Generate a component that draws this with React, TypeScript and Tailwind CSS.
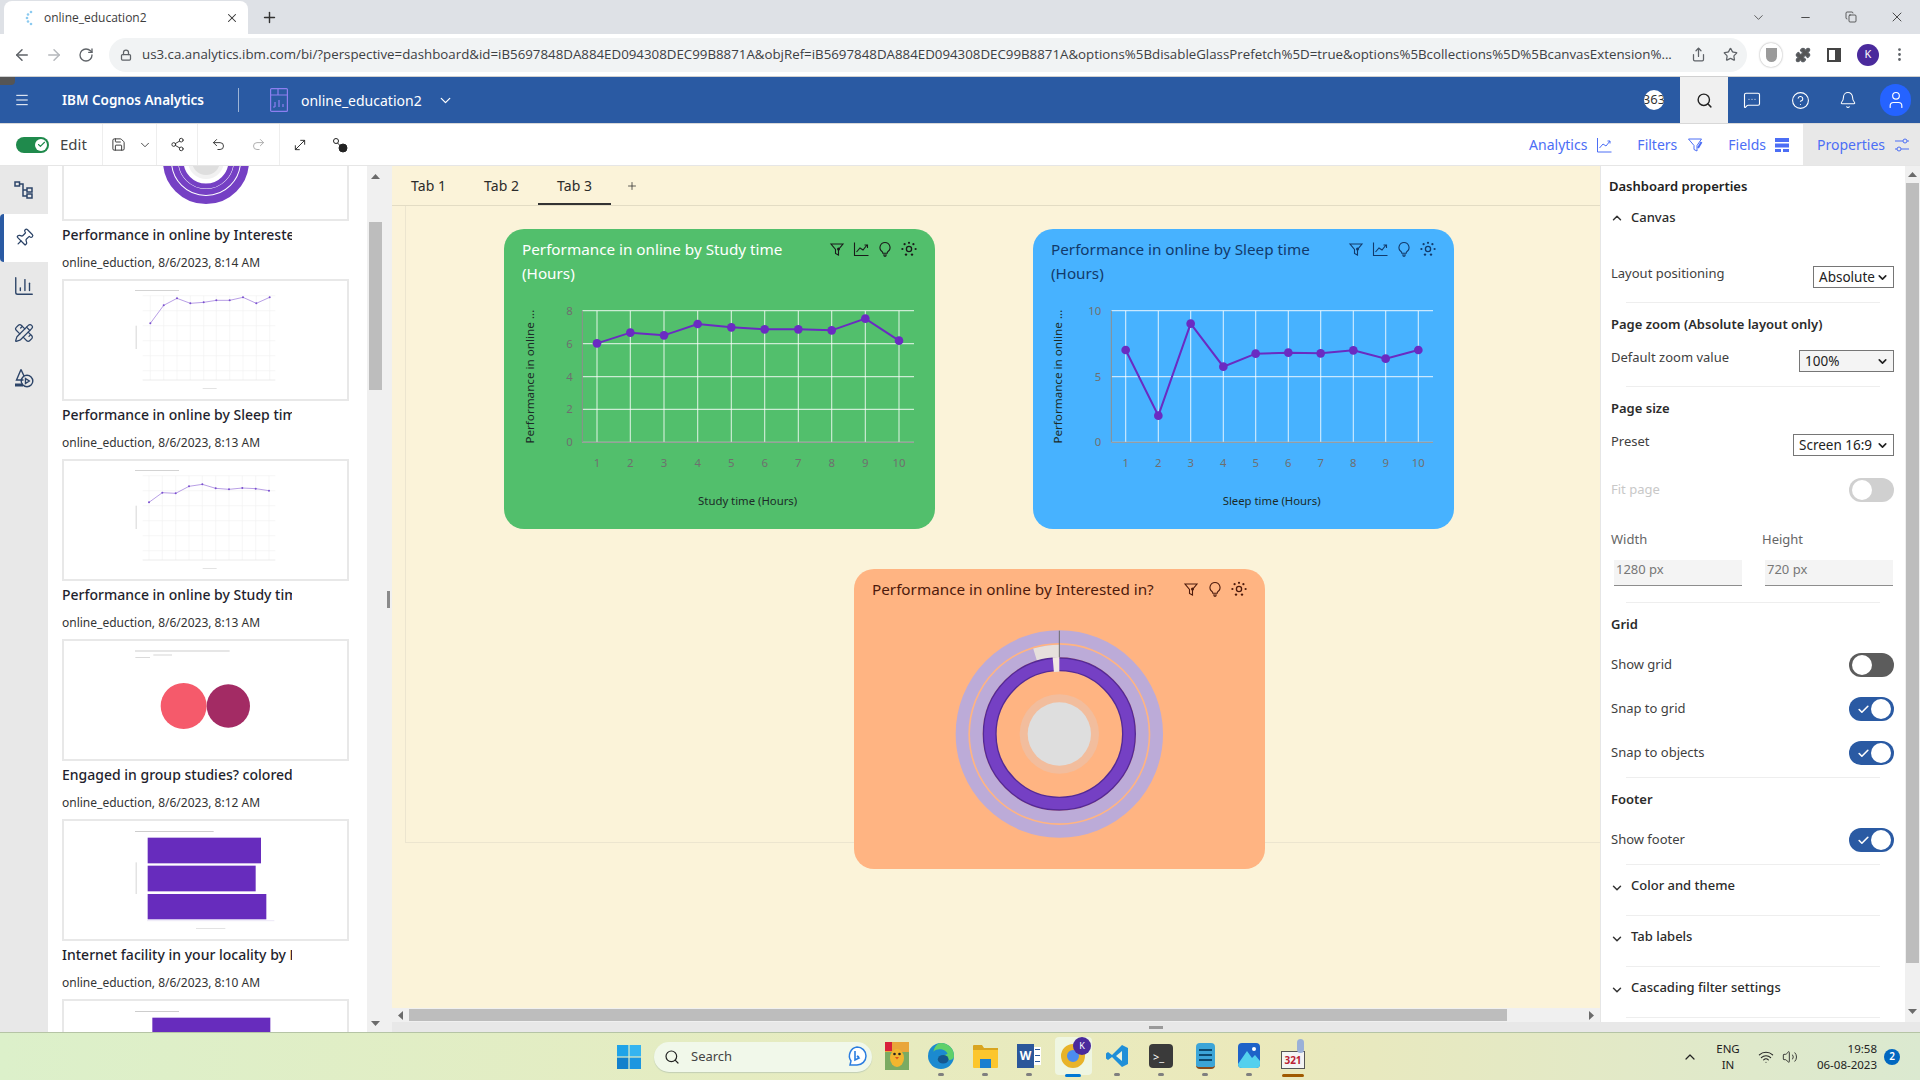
import {
  ArrowLeft, ArrowRight, RotateCw, Lock, Star, Puzzle, EllipsisVertical, ChevronDown, ChevronUp, X, Plus, Minus,
  Menu, Search, Bell, CircleHelp, User, Share2, Undo2, Redo2, Save, MoveDiagonal, Pin, ChartColumn, PencilRuler,
  Copy, Share, MessageSquareMore, Check, Wifi, Volume2,
} from 'lucide-react';
import type { ReactNode } from 'react';

const listItems = [
  { title: 'Performance in online by Interested in?', meta: 'online_eduction, 8/6/2023, 8:14 AM', kind: 'line1' },
  { title: 'Performance in online by Sleep time (Hours)', meta: 'online_eduction, 8/6/2023, 8:13 AM', kind: 'line2' },
  { title: 'Performance in online by Study time (Hours)', meta: 'online_eduction, 8/6/2023, 8:13 AM', kind: 'circles' },
  { title: 'Engaged in group studies? colored', meta: 'online_eduction, 8/6/2023, 8:12 AM', kind: 'bars' },
  { title: 'Internet facility in your locality by Performance', meta: 'online_eduction, 8/6/2023, 8:10 AM', kind: 'bar2' },
];

const gridX = [0, 1, 2, 3, 4, 5, 6, 7, 8, 9];

function MiniLine({ xs, ys }: { xs: number[]; ys: number[] }) {
  return (
    <>
      <rect x="405" y="34" width="132" height="2" fill="#bdbdbd" />
      {gridX.map((i) => (
        <line key={i} x1={xs[i]} x2={xs[i]} y1="50" y2="303" stroke="#f3f3f3" strokeWidth="2" />
      ))}
      {[50, 95, 140, 185, 230, 275].map((y) => (
        <line key={y} x1="428" x2="826" y1={y} y2={y} stroke="#f3f3f3" strokeWidth="2" />
      ))}
      <line x1="428" x2="826" y1="303" y2="303" stroke="#e2e2e2" strokeWidth="2" />
      <polyline points={xs.map((x, i) => `${x},${ys[i]}`).join(' ')} fill="none" stroke="#a98be0" strokeWidth="2.5" />
      {xs.map((x, i) => <circle key={x} cx={x} cy={ys[i]} r="3" fill="#7a4fd0" />)}
      <rect x="407" y="140" width="3" height="70" fill="#d6d6d6" />
      <rect x="608" y="327" width="42" height="2" fill="#d6d6d6" />
    </>
  );
}

function Thumb({ kind }: { kind: string }) {
  return (
    <div className="h-[122px] w-[287px] border-2 border-[#e8e8e8] bg-white">
      <svg className="block h-[118px] w-[283px]" viewBox="192 6 849 354">
        {kind === 'line1' && (
          <MiniLine xs={[451, 491, 531, 571, 611, 649, 689, 729, 769, 809]} ys={[133, 79, 58, 73, 70, 64, 64, 55, 73, 55]} />
        )}
        {kind === 'line2' && (
          <MiniLine xs={[447, 487, 527, 567, 607, 647, 687, 727, 767, 807]} ys={[130, 101, 103, 82, 76, 88, 91, 87, 89, 95]} />
        )}
        {kind === 'circles' && (
          <>
            <rect x="405" y="35" width="284" height="2" fill="#b4b4b4" />
            <rect x="460" y="47" width="56" height="2" fill="#c0c0c0" />
            <rect x="406" y="54" width="44" height="2" fill="#c8c8c8" />
            <circle cx="551" cy="201" r="69" fill="#f55a6b" />
            <circle cx="685" cy="201" r="65" fill="#a32b64" />
          </>
        )}
        {kind === 'bars' && (
          <>
            <rect x="405" y="36" width="236" height="2" fill="#b4b4b4" />
            <rect x="443" y="56" width="340" height="77" fill="#672cbd" />
            <rect x="443" y="140" width="324" height="77" fill="#672cbd" />
            <rect x="443" y="225" width="356" height="76" fill="#672cbd" />
            <line x1="441" x2="823" y1="305" y2="305" stroke="#e2dcf2" strokeWidth="2" />
            <rect x="407" y="130" width="3" height="95" fill="#d6d6d6" />
            <rect x="588" y="327" width="88" height="2" fill="#d6d6d6" />
          </>
        )}
        {kind === 'bar2' && (
          <>
            <rect x="405" y="36" width="132" height="2" fill="#b4b4b4" />
            <rect x="457" y="56" width="354" height="90" fill="#672cbd" />
          </>
        )}
      </svg>
    </div>
  );
}

function TriUp({ dir = 'up' }: { dir?: 'up' | 'down' | 'left' | 'right' }) {
  const turn = { up: '', down: 'rotate-180', left: '-rotate-90', right: 'rotate-90' }[dir];
  return (
    <svg width="9" height="5" viewBox="0 0 9 5" className={turn}>
      <path d="M4.5 0 9 5H0z" fill="#6b6b6b" />
    </svg>
  );
}

function FunnelIco() {
  return (
    <svg width="16" height="16" viewBox="0 0 16 16" fill="none" stroke="currentColor" strokeWidth="1.1">
      <path d="M2 3h12l-4.500 5.500V14l-3-1.500v-4z" />
      <circle cx="9.500" cy="8" r="1.500" fill="currentColor" stroke="none" />
    </svg>
  );
}

function TrendIco() {
  return (
    <svg width="16" height="16" viewBox="0 0 16 16" fill="none" stroke="currentColor" strokeWidth="1.1">
      <path d="M1.500 1.500v13h14" />
      <path d="M3.500 11l3.500-4 3 2 4-5M11.500 4h3v3" />
    </svg>
  );
}

function BulbIco() {
  return (
    <svg width="16" height="16" viewBox="0 0 16 16" fill="none" stroke="currentColor" strokeWidth="1.1">
      <path d="M8 1.500a5 5 0 0 0-3 9c.6.5.8 1 .8 1.700h4.400c0-.7.2-1.200.8-1.700a5 5 0 0 0-3-9z" />
      <path d="M6 14h4M6.800 15.300h2.400" />
    </svg>
  );
}

function SparkIco() {
  return (
    <svg width="16" height="16" viewBox="0 0 16 16" fill="currentColor">
      <circle cx="8" cy="8" r="2.600" fill="none" stroke="currentColor" strokeWidth="1.300" />
      <circle cx="8" cy="1.800" r="1.100" /><circle cx="3.600" cy="3.200" r="1.100" /><circle cx="12.400" cy="3.200" r="1.100" />
      <circle cx="1.400" cy="8" r="1.100" /><circle cx="14.600" cy="8" r="1.100" /><circle cx="5" cy="13.600" r="1.200" /><circle cx="11" cy="13.600" r="1.200" />
    </svg>
  );
}

function CardHead({ title, color, icons, trend, w }: { title: string; color: string; icons: string; trend?: boolean; w: string }) {
  return (
    <div className="flex items-start justify-between pl-[18px] pr-[18px] pt-2">
      <div className={`text-[15.25px] leading-6 ${w} ${color}`}>{title}</div>
      <div className={`flex h-6 items-center gap-2 ${icons}`}>
        <FunnelIco />
        {trend && <TrendIco />}
        <BulbIco />
        <SparkIco />
      </div>
    </div>
  );
}

function LineChart(props: {
  vx: number; w: number; left: number; right: number; xs: number[]; ys: number[];
  yTicks: { y: number; label: string }[]; xTitle: string; xTitleAt: number; yTitleX: number; labelX: number;
}) {
  const { vx, w, left, right, xs, ys, yTicks, xTitle, xTitleAt, yTitleX, labelX } = props;
  return (
    <svg className="block" width={w} height="244" viewBox={`${vx} 195 ${w * 3} 732`} fontFamily="Noto Sans, sans-serif">
      {xs.map((x) => <line key={x} x1={x} x2={x} y1="272" y2="667" stroke="#fff" strokeOpacity=".72" strokeWidth="3.5" />)}
      {yTicks.map((t) => (
        <g key={t.y}>
          <line x1={left} x2={right} y1={t.y} y2={t.y} stroke="#fff" strokeOpacity=".7" strokeWidth="3.5" />
          <text x={labelX} y={t.y - 2} fontSize="34" fill="#6f6f6f" textAnchor="end" dominantBaseline="central">{t.label}</text>
        </g>
      ))}
      <line x1={left} x2={left} y1="272" y2="667" stroke="#8f8f8f" strokeWidth="3" />
      <line x1={left} x2={right} y1="667" y2="667" stroke="#8f8f8f" strokeWidth="3" />
      {xs.map((x, i) => (
        <text key={x} x={x} y="726" fontSize="34" fill="#6f6f6f" textAnchor="middle" dominantBaseline="central">{i + 1}</text>
      ))}
      <polyline points={xs.map((x, i) => `${x},${ys[i]}`).join(' ')} fill="none" stroke="#6a2bc2" strokeWidth="6" />
      {xs.map((x, i) => <circle key={x} cx={x} cy={ys[i]} r="13" fill="#6a2bc2" />)}
      <text x={xTitleAt} y="840" fontSize="34" fill="#1c2b28" textAnchor="middle" dominantBaseline="central">{xTitle}</text>
      <text
        x={yTitleX} y="470" fontSize="35" fill="#1c2b28" textAnchor="middle" dominantBaseline="central"
        transform={`rotate(-90 ${yTitleX} 470)`}
      >
        Performance in online ...
      </text>
    </svg>
  );
}

const polar = (r: number, deg: number) => {
  const a = ((deg - 90) * Math.PI) / 180;
  return `${628 + r * Math.cos(a)} ${522 + r * Math.sin(a)}`;
};
const arc = (r: number, from: number, to: number) =>
  `M${polar(r, from)} A${r} ${r} 0 ${to - from > 180 ? 1 : 0} 1 ${polar(r, to)}`;

function Donut() {
  return (
    <svg className="block" width="411" height="268" viewBox="12 123 1233 804">
      <circle cx="628" cy="522" r="292" fill="none" stroke="#bcabd8" strokeWidth="38" />
      <circle cx="628" cy="522" r="249" fill="none" stroke="#bcabd8" strokeWidth="38" />
      <path d={arc(249, -17, 0)} fill="none" stroke="#e6e0dc" strokeWidth="38" />
      <circle cx="628" cy="522" r="209" fill="none" stroke="#542a96" strokeWidth="42" />
      <circle cx="628" cy="522" r="209" fill="none" stroke="#7540c4" strokeWidth="34" />
      <path d={arc(209, -5, 0)} fill="none" stroke="#f1e8e2" strokeWidth="44" />
      <circle cx="628" cy="522" r="119" fill="#f2bd9d" />
      <circle cx="628" cy="522" r="95" fill="#dedede" />
      <line x1="628" x2="628" y1="212" y2="292" stroke="#6b6b6b" strokeWidth="3" />
    </svg>
  );
}

function Toggle({ state }: { state: 'on' | 'off' | 'disabled' }) {
  if (state === 'on') {
    return (
      <div className="flex h-6 w-[45px] items-center justify-between rounded-full bg-[#2a5aa3] pl-2 pr-[3px]">
        <Check size={13} strokeWidth={3} className="text-white" />
        <div className="h-[20px] w-[20px] rounded-full bg-white" />
      </div>
    );
  }
  return (
    <div className={`flex h-6 w-[45px] items-center rounded-full pl-[3px] ${state === 'off' ? 'bg-[#5c5c5c]' : 'bg-[#d0d0d0]'}`}>
      <div className="h-[20px] w-[20px] rounded-full bg-white" />
    </div>
  );
}

function Sel({ w, label, grey }: { w: string; label: string; grey?: boolean }) {
  return (
    <div className={`flex h-[22px] items-center justify-between border border-[#767676] pl-[5px] pr-1 text-[13.5px] text-[#222] ${w} ${grey ? 'bg-[#f4f4f4]' : 'bg-white'}`}>
      <span>{label}</span>
      <ChevronDown size={13} strokeWidth={3} />
    </div>
  );
}

function Divider({ mt }: { mt: string }) {
  return <div className={`ml-[25px] h-px w-[254px] bg-[#eeeeee] ${mt}`} />;
}

function ToggleRow({ label, state, mt }: { label: string; state: 'on' | 'off'; mt: string }) {
  return (
    <div className={`flex h-6 items-center justify-between pl-[10px] pr-[11px] ${mt}`}>
      <span className="text-[13px] text-[#3f3f3f]">{label}</span>
      <Toggle state={state} />
    </div>
  );
}

function Heading({ label, mt }: { label: string; mt: string }) {
  return <div className={`h-5 pl-[10px] text-[13px] font-semibold leading-5 text-[#2b2b2b] ${mt}`}>{label}</div>;
}

function Collapsed({ label, open, mt }: { label: string; open?: boolean; mt: string }) {
  return (
    <div className={`flex h-5 items-center pl-[9px] ${mt}`}>
      {open ? <ChevronUp size={14} strokeWidth={2.5} className="text-[#333]" /> : <ChevronDown size={14} strokeWidth={2.5} className="mt-1 text-[#333]" />}
      <span className="ml-[7px] text-[13px] font-medium text-[#2b2b2b]">{label}</span>
    </div>
  );
}

function ChromeBar() {
  return (
    <>
      <div className="flex h-[34px] items-end bg-[#dee1e6] text-[#333]">
        <div className="ml-1 flex h-[33px] w-[244px] items-center rounded-t-lg bg-white pl-[20px] pr-[9px]">
          <svg width="10" height="16" viewBox="0 0 10 16" fill="#8ccaf0">
            <circle cx="7" cy="2" r="1.300" /><circle cx="4" cy="4.500" r="1.300" /><circle cx="3" cy="8" r="1.300" /><circle cx="4" cy="11.500" r="1.300" /><circle cx="7" cy="14" r="1.300" />
          </svg>
          <span className="ml-[10px] flex-1 font-['Open_Sans'] text-[12px] text-[#3c3c3c]">online_education2</span>
          <X size={14} strokeWidth={1.8} />
        </div>
        <Plus size={17} strokeWidth={2} className="mb-2 ml-[13px]" />
        <div className="ml-auto flex h-[34px] items-center">
          <ChevronDown size={15} strokeWidth={1.2} className="mr-[33px]" />
          <Minus size={13} strokeWidth={1.6} className="mr-[33px]" />
          <Copy size={12} strokeWidth={1.5} className="mr-[32px]" />
          <X size={16} strokeWidth={1.3} className="mr-[15px]" />
        </div>
      </div>
      <div className="flex h-[43px] items-center border-b border-[#d0d0d0] bg-white pb-[1px] text-[#5f6368]">
        <ArrowLeft size={18} strokeWidth={2} className="ml-[13px]" />
        <ArrowRight size={18} strokeWidth={2} className="ml-[14px] text-[#b5b8bc]" />
        <RotateCw size={16} strokeWidth={2} className="ml-[15px]" />
        <div className="ml-[15px] flex h-[34px] w-[1638px] items-center rounded-full bg-[#f1f3f4] pl-[11px] pr-[9px]">
          <Lock size={12} strokeWidth={2.5} />
          <div className="ml-[10px] w-[1535px] truncate font-['Open_Sans'] text-[13.3px] text-[#3c4043]">
            us3.ca.analytics.ibm.com/bi/?perspective=dashboard&amp;id=iB5697848DA884ED094308DEC99B8871A&amp;objRef=iB5697848DA884ED094308DEC99B8871A&amp;options%5BdisableGlassPrefetch%5D=true&amp;options%5Bcollections%5D%5BcanvasExtension%...
          </div>
          <Share size={15} className="ml-auto" />
          <Star size={15} className="ml-[17px]" />
        </div>
        <div className="ml-[13px] flex h-[24px] w-[22px] items-center justify-center rounded-full bg-white shadow-[0_0_2px_#999]">
          <div className="h-[14px] w-[11px] rounded-b-full bg-[#9a9a9a]" />
        </div>
        <Puzzle size={16} fill="#555" className="ml-[13px]" />
        <div className="ml-[16px] flex h-[14px] w-[14px] justify-end border-2 border-[#444]"><div className="h-full w-[4px] bg-[#444]" /></div>
        <div className="ml-[16px] flex h-[22px] w-[22px] items-center justify-center rounded-full bg-[#4a2a9c] text-[11px] text-white">K</div>
        <EllipsisVertical size={17} className="ml-[12px]" />
      </div>
    </>
  );
}

function AppHeader() {
  return (
    <div className="relative flex h-[47px] items-center border-b border-[#d8d8d8] bg-[#2a5aa3] text-white">
      <div className="absolute left-0 top-0 h-2 w-[15px] rounded-br-sm bg-[#555]" />
      <Menu size={16} strokeWidth={1.5} className="ml-[14px]" />
      <div className="ml-[32px] w-[176px] text-[13.5px] font-semibold">IBM Cognos Analytics</div>
      <div className="h-6 w-px bg-[#9db4d6]" />
      <svg width="18" height="24" viewBox="0 0 18 24" fill="none" stroke="#8d7ff0" strokeWidth="1.2" className="ml-[31px]">
        <rect x=".6" y=".6" width="16.8" height="22.8" rx="1" /><path d="M.6 7h16.8M8 .6V7M5 19v-5M5 19H3M9 19v-7M13 19v-3" />
      </svg>
      <div className="ml-[13px] w-[131px] text-[14px]">online_education2</div>
      <ChevronDown size={17} strokeWidth={1.8} className="ml-[5px]" />
      <div className="ml-auto flex h-[46px] items-center">
        <div className="mr-4 flex h-5 w-5 items-center justify-center overflow-hidden rounded-full bg-white text-[13px] text-[#333]">363</div>
        <div className="flex h-full w-12 items-center justify-center bg-[#f0f0f0] text-[#222]"><Search size={17} strokeWidth={2} /></div>
        <div className="flex h-full w-12 items-center justify-center"><MessageSquareMore size={18} strokeWidth={1.5} /></div>
        <div className="flex h-full w-12 items-center justify-center"><CircleHelp size={19} strokeWidth={1.4} /></div>
        <div className="flex h-full w-12 items-center justify-center"><Bell size={18} strokeWidth={1.4} /></div>
        <div className="ml-2 mr-[9px] flex h-8 w-[31px] items-center justify-center rounded-full bg-[#2563ff]"><User size={20} strokeWidth={1.4} /></div>
      </div>
    </div>
  );
}

function Toolbar() {
  return (
    <div className="flex h-[42px] items-stretch border-b border-[#e6e6e6] bg-white text-[#333]">
      <div className="flex w-[103px] items-center border-r border-[#eeeeee] pl-4">
        <div className="flex h-4 w-[33px] items-center justify-end rounded-full bg-[#1f8a4c] pr-[2px]">
          <div className="flex h-3 w-3 items-center justify-center rounded-full bg-white"><Check size={9} strokeWidth={3} className="text-[#1f8a4c]" /></div>
        </div>
        <span className="ml-[11px] text-[15px] text-[#444]">Edit</span>
      </div>
      <div className="flex w-[54px] items-center border-r border-[#eeeeee] pl-2">
        <Save size={15} strokeWidth={1.5} />
        <ChevronDown size={14} strokeWidth={1.5} className="ml-3" />
      </div>
      <div className="flex w-[41px] items-center justify-center border-r border-[#eeeeee]"><Share2 size={15} strokeWidth={1.5} /></div>
      <div className="flex w-[82px] items-center gap-[25px] border-r border-[#eeeeee] pl-[13px]">
        <Undo2 size={15} strokeWidth={1.5} />
        <Redo2 size={15} strokeWidth={1.5} className="text-[#aaaaaa]" />
      </div>
      <div className="flex items-center pl-3">
        <MoveDiagonal size={16} strokeWidth={1.5} />
        <svg width="16" height="16" viewBox="0 0 16 16" className="ml-6" fill="none" stroke="#222">
          <circle cx="4" cy="4" r="2.500" /><path d="M5.500 6 9 9.500" /><circle cx="11" cy="11" r="4" fill="#222" />
        </svg>
      </div>
      <div className="ml-auto flex items-center text-[14px] text-[#4c6ef5]">
        <span>Analytics</span>
        <svg width="16" height="16" viewBox="0 0 16 16" fill="none" stroke="currentColor" className="ml-[9px]"><path d="M1.500 1v14h14M3.500 11l3.500-4 3 2 4-5M11.500 4h2.500v2.500" /></svg>
        <span className="ml-[25px]">Filters</span>
        <svg width="16" height="16" viewBox="0 0 16 16" fill="none" stroke="currentColor" className="ml-[10px]"><path d="M1.500 2h13L10 8.500V14l-3-1.500v-4z" /><path d="M11 11l3.500-6" strokeWidth="2" /></svg>
        <span className="ml-[25px]">Fields</span>
        <svg width="16" height="16" viewBox="0 0 16 16" fill="currentColor" className="ml-[8px]"><path d="M1 1h14v4H1zM1 6.500h14v4H1zM1 12h6v3H1zM9 12h6v3H9z" /></svg>
        <div className="ml-[13px] flex h-full w-[117px] items-center bg-[#e8e8e8] pl-[14px]">
          <span>Properties</span>
          <svg width="16" height="16" viewBox="0 0 16 16" fill="none" stroke="currentColor" className="ml-[9px]"><path d="M1 4h8M13 4h2M1 12h2M7 12h8" /><circle cx="11" cy="4" r="2" /><circle cx="5" cy="12" r="2" /></svg>
        </div>
      </div>
    </div>
  );
}

function SideRail() {
  const ico = 'text-[#2c4468]';
  return (
    <div className="w-12 shrink-0 bg-[#e8e8e8]">
      <div className="flex h-12 items-center justify-center">
        <svg width="20" height="20" viewBox="0 0 20 20" fill="none" stroke="#2c4468" strokeWidth="1.5">
          <rect x="1" y="2" width="4.500" height="4" /><rect x="13" y="8" width="5" height="4" /><rect x="13" y="14" width="5" height="4" />
          <path d="M5.500 4H9v12h4M9 10h4" />
        </svg>
      </div>
      <div className="flex h-12 items-center justify-center rounded-l-sm border-l-4 border-[#2a5aa3] bg-white pr-1"><Pin size={20} strokeWidth={1.5} className={`${ico} rotate-45`} /></div>
      <div className="flex h-12 items-center justify-center"><ChartColumn size={22} strokeWidth={1.5} className={ico} /></div>
      <div className="flex h-[45px] items-center justify-center"><PencilRuler size={20} strokeWidth={1.5} className={ico} /></div>
      <div className="flex h-[46px] items-center justify-center">
        <svg width="20" height="20" viewBox="0 0 20 20" fill="none" stroke="#2c4468" strokeWidth="1.4">
          <path d="M7 1.500 2.500 12h7" /><path d="M7 1.500 10 8" /><path d="M1 17h8" strokeWidth="3" />
          <circle cx="13" cy="13" r="5.800" /><path d="M11.500 10.500v5l3.800-2.500z" />
        </svg>
      </div>
    </div>
  );
}

function ListPanel() {
  return (
    <div className="w-[319px] shrink-0 overflow-hidden bg-white">
      <div className="ml-[14px] h-[55px] w-[287px] overflow-hidden border-x-2 border-b-2 border-[#e8e8e8]">
        <svg width="283" height="53" viewBox="0 0 283 53" className="block">
          <circle cx="142" cy="-5" r="39" fill="none" stroke="#7540c4" strokeWidth="8" />
          <circle cx="142" cy="-5" r="31" fill="none" stroke="#7540c4" strokeWidth="6" />
          <circle cx="142" cy="-5" r="25" fill="none" stroke="#7540c4" strokeWidth="5" />
          <circle cx="142" cy="-5" r="18" fill="#f1f1f1" />
          <circle cx="142" cy="-5" r="14" fill="#dedede" />
        </svg>
      </div>
      {listItems.map((item, i) => (
        <div key={i} className="pl-[14px]">
          {i > 0 && <Thumb kind={listItems[i - 1].kind} />}
          <div className="h-7 w-[230px] overflow-hidden whitespace-nowrap text-[14px] font-medium leading-7 text-[#1f1f2e]">{item.title}</div>
          <div className="h-7 pb-[2px] text-[12px] leading-7 text-[#333]">{item.meta}</div>
          <div className="h-[2px]" />
        </div>
      ))}
      <div className="pl-[14px]"><Thumb kind="bar2" /></div>
    </div>
  );
}

function Canvas() {
  return (
    <div className="flex w-[1208px] shrink-0 flex-col bg-[#fbf3d9]">
      <div className="flex h-10 shrink-0 items-stretch border-b border-[#e3dcc4] text-[14px] text-[#2b2b2b]">
        <div className="flex w-[73px] items-center justify-center">Tab 1</div>
        <div className="flex w-[73px] items-center justify-center">Tab 2</div>
        <div className="flex w-[73px] items-center justify-center border-y-2 border-t-transparent border-b-[#333]">Tab 3</div>
        <div className="ml-[15px] flex items-center"><Plus size={12} strokeWidth={1.5} /></div>
      </div>
      <div className="h-[802px] overflow-hidden">
        <div className="ml-[13px] h-[637px] border-b border-l border-[#ece5cf] pt-[23px]">
          <div className="ml-[98px] flex gap-[98px]">
            <div className="h-[300px] w-[431px] rounded-[20px] bg-[#52bf6c]">
              <CardHead title="Performance in online by Study time (Hours)" color="text-white" icons="text-[#1a1a1a]" trend w="w-[290px]" />
              <LineChart
                vx={42} w={431} left={277} right={1272}
                xs={[321, 421, 522, 623, 724, 824, 925, 1025, 1126, 1227]}
                ys={[370, 338, 346, 312, 322, 328, 328, 331, 296, 362]}
                yTicks={[{ y: 272, label: '8' }, { y: 371, label: '6' }, { y: 470, label: '4' }, { y: 568, label: '2' }, { y: 667, label: '0' }]}
                xTitle="Study time (Hours)" xTitleAt={773} yTitleX={118} labelX={248}
              />
            </div>
            <div className="h-[300px] w-[421px] rounded-[20px] bg-[#47b2ff]">
              <CardHead title="Performance in online by Sleep time (Hours)" color="text-[#123a6b]" icons="text-[#123a6b]" trend w="w-[290px]" />
              <LineChart
                vx={39} w={421} left={274} right={1239}
                xs={[317, 415, 512, 610, 707, 805, 902, 1000, 1097, 1195]}
                ys={[390, 587, 311, 440, 401, 398, 400, 391, 416, 390]}
                yTicks={[{ y: 272, label: '10' }, { y: 470, label: '5' }, { y: 667, label: '0' }]}
                xTitle="Sleep time (Hours)" xTitleAt={755} yTitleX={114} labelX={244}
              />
            </div>
          </div>
          <div className="ml-[448px] mt-10 h-[300px] w-[411px] rounded-[20px] bg-[#ffb482]">
            <CardHead title="Performance in online by Interested in?" color="text-[#4d1a0c]" icons="text-[#4d1a0c]" w="w-[300px]" />
            <Donut />
          </div>
        </div>
      </div>
      <div className="flex h-[14px] shrink-0 items-center bg-[#f0f0f0] pl-1 pr-1">
        <TriUp dir="left" />
        <div className="ml-1 h-3 w-[1098px] bg-[#bdbdbd]" />
        <div className="ml-auto"><TriUp dir="right" /></div>
      </div>
    </div>
  );
}

function PropsPanel() {
  return (
    <div className="flex w-[320px] shrink-0">
      <div className="w-[305px] shrink-0 border-l border-[#e6e6e6] bg-white text-[#333]">
        <div className="flex h-[42px] items-center pl-2 text-[13px] font-semibold text-[#222]">Dashboard properties</div>
        <Collapsed label="Canvas" open mt="" />
        <div className="mt-[38px] flex items-start justify-between pl-[10px] pr-[11px]">
          <span className="text-[13px] leading-[14px] text-[#3f3f3f]">Layout positioning</span>
          <Sel w="w-[81px]" label="Absolute" />
        </div>
        <Divider mt="mt-[14px]" />
        <Heading label="Page zoom (Absolute layout only)" mt="mt-[11px]" />
        <div className="mt-4 flex items-start justify-between pl-[10px] pr-[11px]">
          <span className="text-[13px] leading-[14px] text-[#3f3f3f]">Default zoom value</span>
          <Sel w="w-[95px]" label="100%" grey />
        </div>
        <Divider mt="mt-[14px]" />
        <Heading label="Page size" mt="mt-[11px]" />
        <div className="mt-4 flex items-start justify-between pl-[10px] pr-[11px]">
          <span className="text-[13px] leading-[14px] text-[#3f3f3f]">Preset</span>
          <Sel w="w-[101px]" label="Screen 16:9" />
        </div>
        <div className="mt-[22px] flex h-6 items-center justify-between pl-[10px] pr-[11px]">
          <span className="text-[13px] text-[#c8c8c8]">Fit page</span>
          <Toggle state="disabled" />
        </div>
        <div className="mt-7 flex h-5 items-center pl-[10px] text-[13px] text-[#666]">
          <span className="w-[151px]">Width</span><span>Height</span>
        </div>
        <div className="mt-[10px] flex gap-[23px] pl-[13px] text-[13px] text-[#777]">
          <div className="h-[26px] w-[128px] border-b border-[#8d8d8d] bg-[#f4f4f4] pl-[2px] leading-[18px]">1280 px</div>
          <div className="h-[26px] w-[128px] border-b border-[#8d8d8d] bg-[#f4f4f4] pl-[2px] leading-[18px]">720 px</div>
        </div>
        <Divider mt="mt-4" />
        <Heading label="Grid" mt="mt-[11px]" />
        <ToggleRow label="Show grid" state="off" mt="mt-[19px]" />
        <ToggleRow label="Snap to grid" state="on" mt="mt-5" />
        <ToggleRow label="Snap to objects" state="on" mt="mt-5" />
        <Divider mt="mt-3" />
        <Heading label="Footer" mt="mt-[11px]" />
        <ToggleRow label="Show footer" state="on" mt="mt-[19px]" />
        <Divider mt="mt-3" />
        <Collapsed label="Color and theme" mt="mt-[11px]" />
        <Divider mt="mt-[19px]" />
        <Collapsed label="Tab labels" mt="mt-[11px]" />
        <Divider mt="mt-[19px]" />
        <Collapsed label="Cascading filter settings" mt="mt-[11px]" />
        <Divider mt="mt-[19px]" />
      </div>
      <div className="flex w-[15px] shrink-0 flex-col items-center bg-[#f0f0f0]">
        <div className="mt-[6px]"><TriUp /></div>
        <div className="mt-[6px] h-[780px] w-[13px] bg-[#bdbdbd]" />
        <div className="mb-2 mt-auto"><TriUp dir="down" /></div>
      </div>
    </div>
  );
}

function Slot({ children, mark = 'dot' }: { children: ReactNode; mark?: 'dot' | 'blue' | 'brown' | 'none' }) {
  return (
    <div className="relative flex h-full w-11 items-center justify-center pb-[2px]">
      {children}
      {mark === 'dot' && <div className="absolute bottom-[4px] h-[3px] w-[6px] rounded-full bg-[#7f7f7f]" />}
      {mark === 'blue' && <div className="absolute bottom-[3px] h-[3px] w-4 rounded-full bg-[#0078d4]" />}
      {mark === 'brown' && <div className="absolute bottom-[3px] h-[3px] w-[22px] rounded-full bg-[#a05a00]" />}
    </div>
  );
}

function Taskbar() {
  return (
    <div className="flex h-12 items-center border-t border-[#b5c4a5] bg-gradient-to-r from-[#dcf0ca] via-[#ebe9bb] via-[65%] to-[#dbe9d0] text-[#222]">
      <svg width="24" height="24" viewBox="0 0 24 24" className="ml-[617px]">
        <path d="M0 0h11.400v11.400H0z" fill="#1fa3e8" /><path d="M12.600 0H24v11.400H12.600z" fill="#35b4f0" /><path d="M0 12.600h11.400V24H0z" fill="#1280cc" /><path d="M12.600 12.600H24V24H12.600z" fill="#1c96e0" />
      </svg>
      <div className="ml-[13px] flex h-[30px] w-[218px] items-center rounded-full bg-[#f1f8ea] pl-[10px] shadow-[0_1px_1px_#c2cfb4]">
        <Search size={16} strokeWidth={1.8} />
        <span className="ml-[11px] text-[13px] text-[#444]">Search</span>
        <svg width="20" height="22" viewBox="0 0 20 22" fill="none" className="ml-auto mr-[5px]">
          <path d="M10 1a9 9 0 0 1 0 18H3l1-4a9 9 0 0 1 6-14z" stroke="#2b7de0" strokeWidth="1.500" fill="#fff" />
          <path d="M8 5v9l4-2-2-2 2 1" stroke="#2b7de0" strokeWidth="1.600" />
        </svg>
      </div>
      <div className="ml-[3px] flex h-full items-center">
        <Slot mark="none">
          <svg width="24" height="28" viewBox="0 0 24 28">
            <path d="M0 0h24v28H0z" fill="#7bab62" /><path d="M0 0h24v10H0z" fill="#e9a63a" />
            <ellipse cx="12" cy="16" rx="7" ry="9" fill="#f2b62f" /><circle cx="9.500" cy="12" r="1.300" fill="#222" /><circle cx="14.500" cy="12" r="1.300" fill="#222" />
            <path d="M10 15h4l-2 2.500z" fill="#d9541e" /><path d="M0 0h7v9H0z" fill="#d8213a" />
          </svg>
        </Slot>
        <Slot>
          <svg width="26" height="26" viewBox="0 0 24 24">
            <circle cx="12" cy="12" r="12" fill="#1b8ad0" />
            <path d="M12 0a12 12 0 0 1 12 12c0 3-3 4-6 4H9c0-5 6-4 9-6-1-4-9-6-13-2 1-5 4-8 7-8z" fill="#5fd06a" />
            <ellipse cx="14" cy="15" rx="5" ry="4" fill="#14568f" />
          </svg>
        </Slot>
        <Slot>
          <svg width="25" height="24" viewBox="0 0 25 24">
            <path d="M0 2a1 1 0 0 1 1-1h8l2 3h14v4H0z" fill="#d9a520" /><path d="M0 6h25v17a1 1 0 0 1-1 1H1a1 1 0 0 1-1-1z" fill="#fcc62d" /><path d="M7 15h11v9H7z" fill="#1a7fd0" />
          </svg>
        </Slot>
        <Slot>
          <div className="flex h-[24px] w-[24px]">
            <div className="flex h-full w-[17px] items-center justify-center bg-[#2b579a] text-[12px] font-bold text-white">W</div>
            <div className="my-[3px] flex flex-1 flex-col justify-around bg-white px-[1px]"><div className="h-px bg-[#2b579a]" /><div className="h-px bg-[#2b579a]" /><div className="h-px bg-[#2b579a]" /></div>
          </div>
        </Slot>
        <Slot mark="blue">
          <div className="flex h-[38px] w-[37px] items-center justify-center rounded bg-[#eff6e2]">
            <div className="relative h-6 w-6 rounded-full border-[6px] border-[#e8b32a] bg-[#4b8df0]">
              <div className="absolute -right-[12px] -top-[13px] flex h-[18px] w-[18px] items-center justify-center rounded-full bg-[#4a2a9c] text-[9px] text-white">K</div>
            </div>
          </div>
        </Slot>
        <Slot>
          <svg width="24" height="24" viewBox="0 0 24 24"><path d="M17 1 23 4v16l-6 3L7 13l-4 3-2-1.500V9.500L3 8l4 3z" fill="#1f8fd8" /><path d="M17 7v10l-6-5z" fill="#eaf3df" /></svg>
        </Slot>
        <Slot>
          <div className="h-[24px] w-[24px] rounded-sm bg-[#3a3a3a] pl-1 pt-[5px] text-[11px] leading-4 text-white">&gt;_</div>
        </Slot>
        <Slot>
          <div className="flex h-[26px] w-[19px] flex-col justify-center gap-[3px] rounded-sm border-b-2 border-[#8a4a1a] bg-[#3ca5d8] px-[3px]"><div className="h-[2px] bg-[#0d4a70]" /><div className="h-[2px] bg-[#0d4a70]" /><div className="h-[2px] bg-[#0d4a70]" /></div>
        </Slot>
        <Slot>
          <svg width="22" height="25" viewBox="0 0 22 25">
            <rect width="22" height="25" rx="4" fill="#1e62c8" /><path d="M0 21 9 8l5 7 3-3 5 6v3a4 4 0 0 1-4 4H4a4 4 0 0 1-4-4z" fill="#53d0ee" /><circle cx="16" cy="6" r="2" fill="#fff" />
          </svg>
        </Slot>
        <Slot mark="brown">
          <div className="relative flex h-[26px] w-[26px] items-end justify-center">
            <div className="h-[18px] w-[24px] border border-[#555] bg-[#f4f4f4] text-center text-[10px] font-bold leading-4 text-[#b23]">321</div>
            <div className="absolute right-[2px] top-[-4px] h-[14px] w-[7px] rounded-full bg-[#9ab0d8]" />
          </div>
        </Slot>
      </div>
      <div className="ml-auto flex items-center">
        <ChevronUp size={16} strokeWidth={1.8} className="mr-[15px]" />
        <div className="mr-[15px] w-[30px] text-center text-[11.5px] leading-4">ENG<br />IN</div>
        <Wifi size={16} strokeWidth={1.6} />
        <Volume2 size={16} strokeWidth={1.3} className="ml-2" />
        <div className="ml-[14px] w-[65px] whitespace-nowrap text-right text-[11.5px] leading-4">19:58<br />06-08-2023</div>
        <div className="ml-[7px] mr-5 flex h-4 w-4 items-center justify-center rounded-full bg-[#0067c0] text-[10px] font-semibold text-white">2</div>
      </div>
    </div>
  );
}

export default function App() {
  return (
    <div className="flex h-[1080px] w-[1920px] flex-col overflow-hidden bg-white font-['Noto_Sans',sans-serif]">
      <ChromeBar />
      <AppHeader />
      <Toolbar />
      <div className="flex h-[866px] shrink-0">
        <SideRail />
        <ListPanel />
        <div className="flex w-[17px] shrink-0 flex-col items-center bg-[#f0f0f0]">
          <div className="mt-2"><TriUp /></div>
          <div className="mt-[43px] h-[168px] w-[13px] bg-[#bdbdbd]" />
          <div className="mb-[6px] mt-auto"><TriUp dir="down" /></div>
        </div>
        <div className="flex w-2 shrink-0 items-center justify-center bg-[#f0f0f0]"><div className="h-[17px] w-[3px] bg-[#8a8a8a]" /></div>
        <div className="flex flex-col">
          <div className="flex h-[856px]">
            <Canvas />
            <PropsPanel />
          </div>
          <div className="flex h-[10px] items-center justify-center bg-[#e8e8e8]"><div className="h-[3px] w-[14px] bg-[#9a9a9a]" /></div>
        </div>
      </div>
      <Taskbar />
    </div>
  );
}
